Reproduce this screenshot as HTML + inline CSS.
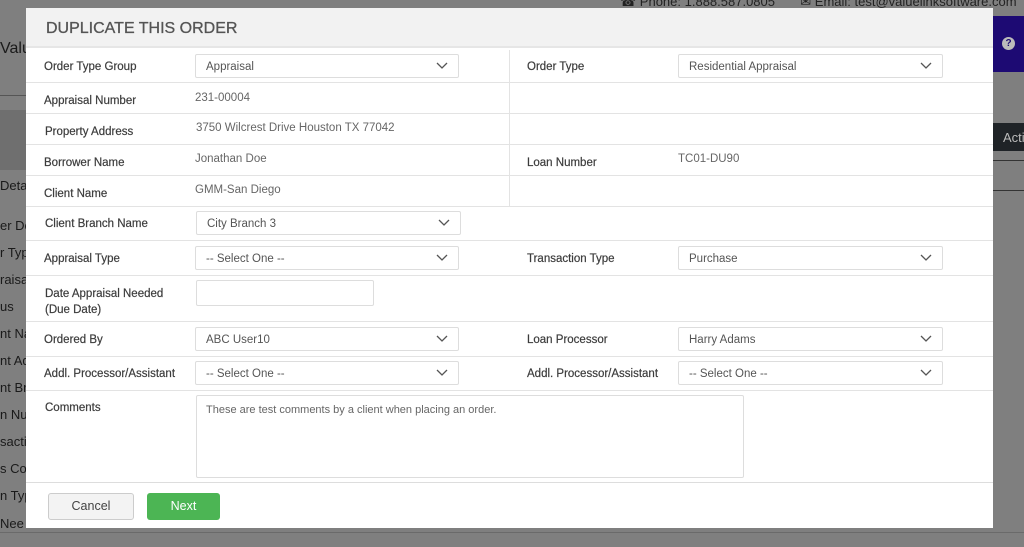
<!DOCTYPE html>
<html><head><style>
*{margin:0;padding:0;box-sizing:border-box}
body{width:1024px;height:547px;overflow:hidden;background:#7f7f7f;font-family:"Liberation Sans",sans-serif;position:relative}
.a{position:absolute;white-space:nowrap}
.bgt{color:#1a1a1a;font-size:13px}
.m{position:absolute;left:26px;top:8px;width:967px;height:520px;background:#fff}
.hd{position:absolute;left:0;top:0;width:967px;height:40px;background:#f2f2f2;border-bottom:2px solid #e6e6e6}
.hd span{position:absolute;left:20px;top:12px;font-size:16px;color:#555;-webkit-text-stroke:0.3px #555}
.ln{position:absolute;height:1px;background:#e3e3e3}
.lb{position:absolute;font-size:11.5px;color:#3c3c3c;-webkit-text-stroke:0.2px #3c3c3c}
.v{position:absolute;font-size:11.5px;color:#666}
.sel{position:absolute;height:24px;border:1px solid #ddd;border-radius:2px;font-size:11.5px;color:#555;padding:6px 10px;background:#fff}
.sel svg{position:absolute;right:10px;top:7px}
</style></head><body>
<div class="a bgt" style="left:0;top:40px;font-size:16px">Valu</div>
<div class="a bgt" style="left:0;top:130px;font-size:16px">GE</div>
<div class="a bgt" style="left:0;top:178px">Detail</div>
<div class="a bgt" style="left:0;top:218px">er De</div>
<div class="a bgt" style="left:0;top:245px">r Typ</div>
<div class="a bgt" style="left:0;top:272px">raisal</div>
<div class="a bgt" style="left:0;top:299px">us</div>
<div class="a bgt" style="left:0;top:326px">nt Na</div>
<div class="a bgt" style="left:0;top:353px">nt Ad</div>
<div class="a bgt" style="left:0;top:380px">nt Bra</div>
<div class="a bgt" style="left:0;top:407px">n Num</div>
<div class="a bgt" style="left:0;top:434px">sacti</div>
<div class="a bgt" style="left:0;top:461px">s Con</div>
<div class="a bgt" style="left:0;top:488px">n Typ</div>
<div class="a bgt" style="left:0;top:516px">Nee</div>
<div class="a" style="left:0;top:95px;width:26px;height:1px;background:#555"></div>
<div class="a" style="left:0;top:110px;width:26px;height:60px;background:#6f6f6f"></div>
<div class="a" style="left:0;top:532px;width:1024px;height:1px;background:#6a6a6a"></div>
<div class="a" style="left:620px;top:-6px;font-size:13px;color:#222">&#9742; Phone: 1.888.587.0805 &nbsp;&nbsp;&nbsp;&nbsp;&nbsp;&nbsp;&#9993; Email: test@valuelinksoftware.com</div>
<div class="a" style="left:993px;top:16px;width:31px;height:56px;background:#1d0a73"></div>
<div class="a" style="left:1002px;top:37px;width:13px;height:13px;border-radius:50%;background:#bbb;color:#1d0a73;font-size:10px;font-weight:bold;text-align:center;line-height:13px">?</div>
<div class="a" style="left:993px;top:123px;width:31px;height:28px;background:#1f2327;color:#bbb;font-size:13px;padding:7px 0 0 10px">Acti</div>
<div class="a" style="left:993px;top:160px;width:31px;height:1px;background:#333"></div>
<div class="a" style="left:993px;top:190px;width:31px;height:1px;background:#333"></div>
<div class="m">
<div class="hd"><span>DUPLICATE THIS ORDER</span></div>
<div class="ln" style="left:0;top:74px;width:967px"></div>
<div class="ln" style="left:0;top:105px;width:967px"></div>
<div class="ln" style="left:0;top:136px;width:967px"></div>
<div class="ln" style="left:0;top:167px;width:967px"></div>
<div class="ln" style="left:0;top:198px;width:967px"></div>
<div class="ln" style="left:0;top:232px;width:967px"></div>
<div class="ln" style="left:0;top:267px;width:967px"></div>
<div class="ln" style="left:0;top:313px;width:967px"></div>
<div class="ln" style="left:0;top:348px;width:967px"></div>
<div class="ln" style="left:0;top:382px;width:967px"></div>
<div class="ln" style="left:0;top:474px;width:967px;background:#ddd"></div>
<div class="ln" style="left:483px;top:42px;width:1px;height:156px"></div>
<div class="lb" style="left:18px;top:53px">Order Type Group</div>
<div class="sel" style="left:169px;top:46px;width:264px">Appraisal<svg width="12" height="8"><path d="M1 1l5 5 5-5" stroke="#555" stroke-width="1.3" fill="none"/></svg></div>
<div class="lb" style="left:501px;top:53px">Order Type</div>
<div class="sel" style="left:652px;top:46px;width:265px">Residential Appraisal<svg width="12" height="8"><path d="M1 1l5 5 5-5" stroke="#555" stroke-width="1.3" fill="none"/></svg></div>
<div class="lb" style="left:18px;top:87px">Appraisal Number</div>
<div class="v" style="left:169px;top:84px">231-00004</div>
<div class="lb" style="left:19px;top:118px">Property Address</div>
<div class="v" style="left:170px;top:114px">3750 Wilcrest Drive Houston TX 77042</div>
<div class="lb" style="left:18px;top:149px">Borrower Name</div>
<div class="v" style="left:169px;top:145px">Jonathan Doe</div>
<div class="lb" style="left:501px;top:149px">Loan Number</div>
<div class="v" style="left:652px;top:145px">TC01-DU90</div>
<div class="lb" style="left:18px;top:180px">Client Name</div>
<div class="v" style="left:169px;top:176px">GMM-San Diego</div>
<div class="lb" style="left:19px;top:210px">Client Branch Name</div>
<div class="sel" style="left:170px;top:203px;width:265px">City Branch 3<svg width="12" height="8"><path d="M1 1l5 5 5-5" stroke="#555" stroke-width="1.3" fill="none"/></svg></div>
<div class="lb" style="left:18px;top:245px">Appraisal Type</div>
<div class="sel" style="left:169px;top:238px;width:264px">-- Select One --<svg width="12" height="8"><path d="M1 1l5 5 5-5" stroke="#555" stroke-width="1.3" fill="none"/></svg></div>
<div class="lb" style="left:501px;top:245px">Transaction Type</div>
<div class="sel" style="left:652px;top:238px;width:265px">Purchase<svg width="12" height="8"><path d="M1 1l5 5 5-5" stroke="#555" stroke-width="1.3" fill="none"/></svg></div>
<div class="lb" style="left:19px;top:278px;line-height:16px">Date Appraisal Needed<br>(Due Date)</div>
<div class="sel" style="left:170px;top:272px;width:178px;height:26px"></div>
<div class="lb" style="left:18px;top:326px">Ordered By</div>
<div class="sel" style="left:169px;top:319px;width:264px">ABC User10<svg width="12" height="8"><path d="M1 1l5 5 5-5" stroke="#555" stroke-width="1.3" fill="none"/></svg></div>
<div class="lb" style="left:501px;top:326px">Loan Processor</div>
<div class="sel" style="left:652px;top:319px;width:265px">Harry Adams<svg width="12" height="8"><path d="M1 1l5 5 5-5" stroke="#555" stroke-width="1.3" fill="none"/></svg></div>
<div class="lb" style="left:18px;top:360px">Addl. Processor/Assistant</div>
<div class="sel" style="left:169px;top:353px;width:264px">-- Select One --<svg width="12" height="8"><path d="M1 1l5 5 5-5" stroke="#555" stroke-width="1.3" fill="none"/></svg></div>
<div class="lb" style="left:501px;top:360px">Addl. Processor/Assistant</div>
<div class="sel" style="left:652px;top:353px;width:265px">-- Select One --<svg width="12" height="8"><path d="M1 1l5 5 5-5" stroke="#555" stroke-width="1.3" fill="none"/></svg></div>
<div class="lb" style="left:19px;top:394px">Comments</div>
<div class="sel" style="left:170px;top:387px;width:548px;height:83px;color:#666;font-size:11px;padding:8px 9px">These are test comments by a client when placing an order.</div>
<div class="a" style="left:22px;top:485px;width:86px;height:27px;border:1px solid #ccc;border-radius:3px;background:#f3f3f3;color:#444;font-size:12.5px;text-align:center;line-height:25px">Cancel</div>
<div class="a" style="left:121px;top:485px;width:73px;height:27px;border-radius:3px;background:#4cb554;color:#fff;font-size:12.5px;text-align:center;line-height:27px">Next</div>
</div>
</body></html>
